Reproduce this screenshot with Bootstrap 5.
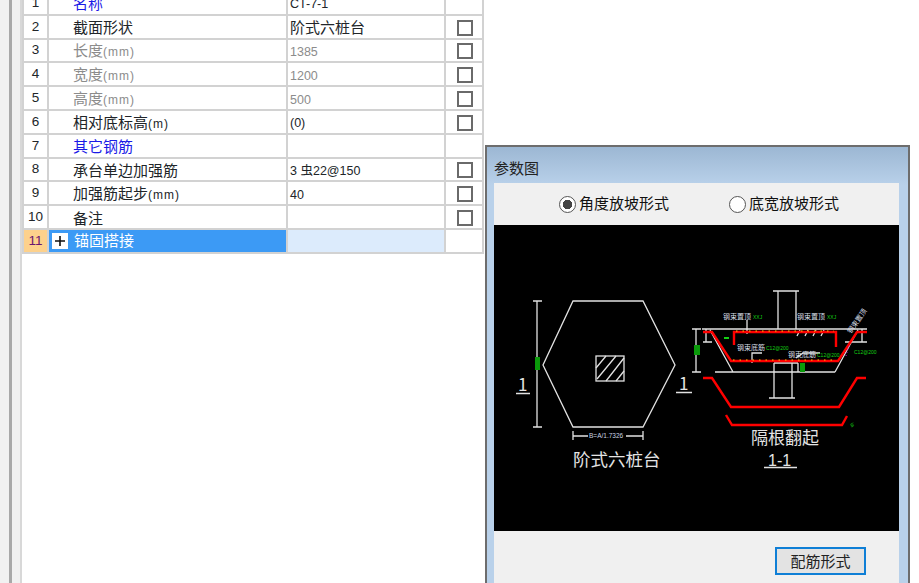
<!DOCTYPE html>
<html lang="zh-CN">
<head>
<meta charset="UTF-8" />
<meta name="viewport" content="width=device-width, initial-scale=1" />
<title>参数图</title>
<link href="https://cdn.jsdelivr.net/npm/bootstrap@5.3.0/dist/css/bootstrap.min.css" rel="stylesheet" />
<style>
  html, body { height: 583px; overflow: hidden; background: #fff; }
  body { font-family: "Liberation Sans", "Noto Sans CJK SC", sans-serif; color: #111; }
  .page-wrap { height: 583px; }
  .rail-a { width: 9px; background: #f1f1f1; }
  .rail-b { width: 3px; background: #a8a8a8; }
  .rail-c { width: 8px; background: #f0f0f0; }
  .rail-d { width: 2px; background: #d8d8d8; }
  .prop-wrap { width: 462px; margin-top: -10px; }
  .prop-table { table-layout: fixed; margin: 0; font-size: 15px; border-color: #d2d2d2; --bs-table-bg: transparent; }
  .prop-table td { height: 23.8px; padding: 0; border: 2px solid #d2d2d2; line-height: 16px; vertical-align: middle; white-space: nowrap; overflow: hidden; }
  .c-num { width: 25px; background: #f3f3f3; text-align: center; font-size: 13.5px; }
  .prop-table .c-name { width: 239px; padding: 3px 0 0 24px; }
  .prop-table .c-val { width: 158px; padding: 3px 0 0 2px; }
  .prop-table .c-chk { text-align: center; padding-left: 2px; }
  .unit { font-size: 12px; letter-spacing: 1px; }
  .val-num { font-size: 12.5px; }
  .t-blue { color: #1a1ae6; }
  .t-gray { color: #8c8c8c; }
  .prop-table .form-check-input { width: 16px; height: 16px; margin: 2px auto 0; border: 2px solid #6a6a6a; border-radius: 0; display: block; }
  .row-sel .c-num { background: #fdd18c; color: #6a1670; }
  .prop-table .row-sel .c-name { background: #3c9af5; color: #fff; padding: 0 0 0 3px; }
  .row-sel .c-val { background: #dcebfc; }
  .plus-box { width: 16px; height: 16px; background: #fff; color: #111; margin-right: 6px; }
  .param-win { position: absolute; left: 485px; top: 145px; width: 425px; height: 460px; border: 2px solid #6d6d6d; background: linear-gradient(#9cb7d3 0, #b9d1ea 38px); padding: 0 9px 0 7px; }
  .win-title { height: 36px; padding-top: 12px; font-size: 15px; line-height: 20px; color: #222; }
  .win-body { background: #f0f0f0; height: 420px; }
  .radio-bar { height: 42px; padding-left: 65px; gap: 60px; font-size: 15px; }
  .radio-bar .form-check-input { width: 17px; height: 17px; margin: 0 3px 0 0; float: none; border: 1.5px solid #555; background-color: #fff; background-image: none; }
  .radio-bar .form-check-input:checked { background: radial-gradient(circle, #444 0 4.5px, #fff 5px); border-color: #555; }
  .draw-box { display: block; width: 405px; height: 306px; background: #000; }
  .foot-bar { padding: 16px 33px 0 0; }
  .foot-btn { width: 91px; height: 28px; padding: 0; border: 2px solid #0f7fd6; border-radius: 0; background: #e3e3e3; color: #222; font-size: 15px; line-height: 1; }
  .cad-t { font-family: "Noto Sans CJK SC", sans-serif; fill: #e4e4e4; }
  .cad-n { font-family: "Liberation Sans", sans-serif; fill: #e4e4e4; }
  .cad-l { fill: none; stroke: #e2e2e2; stroke-width: 1.3; }
  .cad-r { fill: none; stroke: #f00; stroke-width: 2.4; }
  .cad-y { fill: none; stroke: #f5d000; stroke-width: 1; stroke-dasharray: 1.5 5; }
  .cad-m { fill: none; stroke: #d010d0; stroke-width: 1; stroke-dasharray: 1 2; }
  .cad-g { font-family: "Liberation Sans", sans-serif; fill: #14d014; font-size: 5px; }
  .cad-s { font-family: "Noto Sans CJK SC", sans-serif; fill: #d8dfe8; font-size: 7px; }
</style>
</head>
<body>
<div class="d-flex page-wrap">
  <div class="rail-a"></div><div class="rail-b"></div><div class="rail-c"></div><div class="rail-d"></div>
  <div class="prop-wrap">
    <table class="table prop-table">
      <tbody>
        <tr><td class="c-num">1</td><td class="c-name t-blue">名称</td><td class="c-val val-num">CT-7-1</td><td class="c-chk"></td></tr>
        <tr><td class="c-num">2</td><td class="c-name">截面形状</td><td class="c-val">阶式六桩台</td><td class="c-chk"><input class="form-check-input" type="checkbox" /></td></tr>
        <tr><td class="c-num">3</td><td class="c-name t-gray">长度<span class="unit">(mm)</span></td><td class="c-val val-num t-gray">1385</td><td class="c-chk"><input class="form-check-input" type="checkbox" /></td></tr>
        <tr><td class="c-num">4</td><td class="c-name t-gray">宽度<span class="unit">(mm)</span></td><td class="c-val val-num t-gray">1200</td><td class="c-chk"><input class="form-check-input" type="checkbox" /></td></tr>
        <tr><td class="c-num">5</td><td class="c-name t-gray">高度<span class="unit">(mm)</span></td><td class="c-val val-num t-gray">500</td><td class="c-chk"><input class="form-check-input" type="checkbox" /></td></tr>
        <tr><td class="c-num">6</td><td class="c-name">相对底标高<span class="unit">(m)</span></td><td class="c-val val-num">(0)</td><td class="c-chk"><input class="form-check-input" type="checkbox" /></td></tr>
        <tr><td class="c-num">7</td><td class="c-name t-blue">其它钢筋</td><td class="c-val"></td><td class="c-chk"></td></tr>
        <tr><td class="c-num">8</td><td class="c-name">承台单边加强筋</td><td class="c-val val-num">3 虫22@150</td><td class="c-chk"><input class="form-check-input" type="checkbox" /></td></tr>
        <tr><td class="c-num">9</td><td class="c-name">加强筋起步<span class="unit">(mm)</span></td><td class="c-val val-num">40</td><td class="c-chk"><input class="form-check-input" type="checkbox" /></td></tr>
        <tr><td class="c-num">10</td><td class="c-name">备注</td><td class="c-val"></td><td class="c-chk"><input class="form-check-input" type="checkbox" /></td></tr>
        <tr class="row-sel"><td class="c-num">11</td><td class="c-name"><div class="d-flex align-items-center"><span class="plus-box d-inline-flex align-items-center justify-content-center"><svg width="10" height="10" viewBox="0 0 10 10"><path d="M5 0v10M0 5h10" stroke="#111" stroke-width="1.6"/></svg></span>锚固搭接</div></td><td class="c-val"></td><td class="c-chk"></td></tr>
      </tbody>
    </table>
  </div>
</div>

<div class="param-win">
  <div class="win-title">参数图</div>
  <div class="win-body">
    <div class="radio-bar d-flex align-items-center">
      <label class="d-flex align-items-center"><input class="form-check-input" type="radio" name="fp" checked />角度放坡形式</label>
      <label class="d-flex align-items-center"><input class="form-check-input" type="radio" name="fp" />底宽放坡形式</label>
    </div>
    <svg class="draw-box" viewBox="494 225 405 306">
      <!-- 左图 -->
      <path class="cad-l" d="M573 301H643L675 365L643 427H573L543 365Z"/>
      <rect class="cad-l" x="596" y="356" width="28" height="25"/>
      <path class="cad-l" stroke-width=".8" d="M596 368L606 356M597 379L616 356M606 381L624 358M616 381L624 371"/>
      <path class="cad-l" d="M537 301V427M533 301H542M533 427H542M573 431V440M643 431V440M573 436H588M626 436H643"/>
      <rect x="535" y="357" width="5" height="13" fill="#0a9a0a"/>
      <text class="cad-t" x="518" y="391" font-size="17">1</text>
      <path class="cad-l" d="M516 393.500H530M676 392.500H692"/>
      <text class="cad-t" x="679" y="390" font-size="17">1</text>
      <text x="589" y="438" font-size="6.500" fill="#c9d4e2" font-family="Liberation Sans, sans-serif">B=A/1.7326</text>
      <text class="cad-t" x="573" y="466" font-size="17.500">阶式六桩台</text>
      <!-- 右图 -->
      <path class="cad-l" d="M778 291V329M796 291V329M773 291H799M702 329H867M710 330L733 372M858 330L835 372M715 372H835"/>
      <path class="cad-l" d="M774 363V398M792 363V398M769 398H795M774 363H798M798 363V372"/>
      <path class="cad-l" d="M696 329V372M692 329H701M692 372H701M703 342H712M845 342H867M706 342V329M862 342V329"/>
      <path class="cad-l" d="M747 320V334M752 363V353H762M800 330L797 336M808 330L805 336M816 330L813 336M824 330L821 336M796 358L803 353H820"/>
      <path class="cad-r" d="M703 332H712L731 361H838L857 332H867"/>
      <path class="cad-r" d="M734 345V332H836V347"/>
      <path class="cad-y" d="M736 331H834M733 360H836"/>
      <path class="cad-m" d="M846 356L849 345"/>
      <path class="cad-r" d="M703 378H712L731 407H839L857 378H866"/>
      <path class="cad-r" d="M726 415L732 425H842L847 416"/>
      <rect x="694" y="345" width="6" height="10" fill="#0a9a0a"/>
      <rect x="800" y="363" width="5" height="9" fill="#0a9a0a"/>
      <rect x="724" y="337" width="5" height="2" fill="#14d014"/>
      <text class="cad-s" x="723" y="319">钢束置顶</text><text class="cad-g" x="753" y="319">XXJ</text>
      <text class="cad-s" x="797" y="319">钢束置顶</text><text class="cad-g" x="827" y="319">XXJ</text>
      <text class="cad-s" x="737" y="350">钢束底筋</text><text class="cad-g" x="766" y="350">C12@200</text>
      <text class="cad-s" x="788" y="357">钢束底筋</text><text class="cad-g" x="817" y="357">C12@200</text>
      <text class="cad-g" x="854" y="354">C12@200</text>
      <text class="cad-s" transform="translate(851 334) rotate(-55)">钢束置顶</text>
      <text class="cad-g" transform="translate(850 424) rotate(60)">la</text>
      <text class="cad-t" x="751" y="444" font-size="17">隔根翻起</text>
      <text class="cad-n" x="768" y="465.500" font-size="16">1-1</text>
      <path class="cad-l" d="M764 467.500H797"/>
    </svg>
    <div class="foot-bar d-flex justify-content-end">
      <button class="btn foot-btn" type="button">配筋形式</button>
    </div>
  </div>
</div>
<script src="https://cdn.jsdelivr.net/npm/bootstrap@5.3.0/dist/js/bootstrap.bundle.min.js"></script>
</body>
</html>
